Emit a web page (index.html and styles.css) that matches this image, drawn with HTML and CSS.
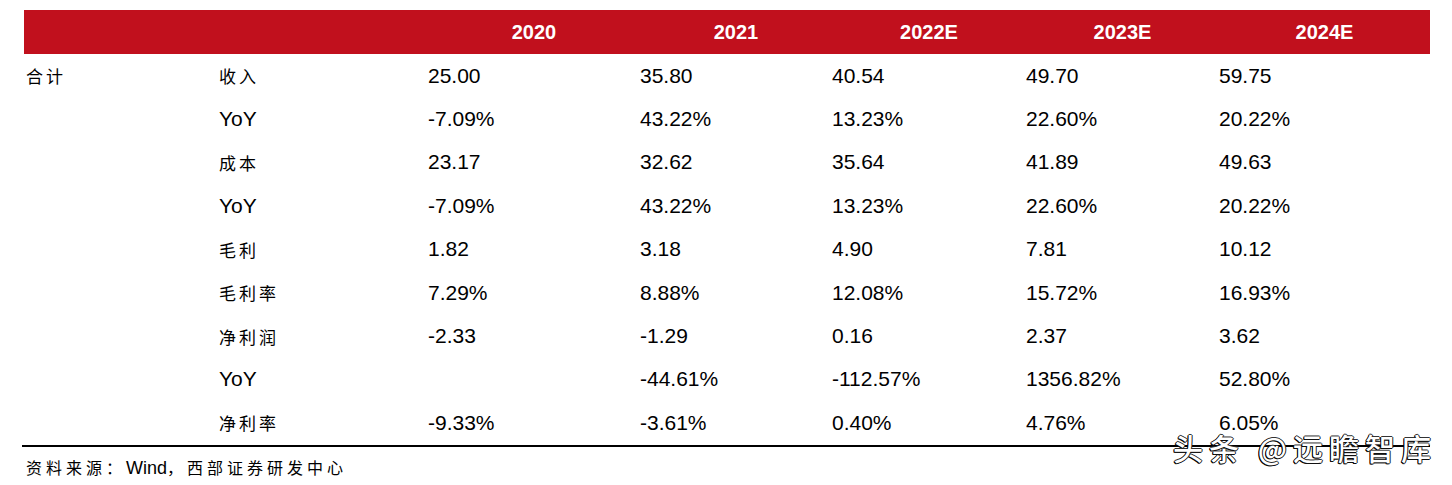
FILE: index.html
```html
<!DOCTYPE html>
<html lang="zh-CN">
<head>
<meta charset="utf-8">
<title>财务预测</title>
<link rel="stylesheet" href="styles.css">
</head>
<body>
<div class="page">
  <div class="table">
    <div class="row head">
      <div class="cell"></div>
      <div class="cell"></div>
      <div class="cell hc">2020</div>
      <div class="cell hc">2021</div>
      <div class="cell hc">2022E</div>
      <div class="cell hc">2023E</div>
      <div class="cell hc">2024E</div>
    </div>
    <div class="row">
      <div class="cell cn first">合计</div>
      <div class="cell cn">收入</div>
      <div class="cell num">25.00</div>
      <div class="cell num">35.80</div>
      <div class="cell num">40.54</div>
      <div class="cell num">49.70</div>
      <div class="cell num">59.75</div>
    </div>
    <div class="row">
      <div class="cell"></div>
      <div class="cell num">YoY</div>
      <div class="cell num">-7.09%</div>
      <div class="cell num">43.22%</div>
      <div class="cell num">13.23%</div>
      <div class="cell num">22.60%</div>
      <div class="cell num">20.22%</div>
    </div>
    <div class="row">
      <div class="cell"></div>
      <div class="cell cn">成本</div>
      <div class="cell num">23.17</div>
      <div class="cell num">32.62</div>
      <div class="cell num">35.64</div>
      <div class="cell num">41.89</div>
      <div class="cell num">49.63</div>
    </div>
    <div class="row">
      <div class="cell"></div>
      <div class="cell num">YoY</div>
      <div class="cell num">-7.09%</div>
      <div class="cell num">43.22%</div>
      <div class="cell num">13.23%</div>
      <div class="cell num">22.60%</div>
      <div class="cell num">20.22%</div>
    </div>
    <div class="row">
      <div class="cell"></div>
      <div class="cell cn">毛利</div>
      <div class="cell num">1.82</div>
      <div class="cell num">3.18</div>
      <div class="cell num">4.90</div>
      <div class="cell num">7.81</div>
      <div class="cell num">10.12</div>
    </div>
    <div class="row">
      <div class="cell"></div>
      <div class="cell cn">毛利率</div>
      <div class="cell num">7.29%</div>
      <div class="cell num">8.88%</div>
      <div class="cell num">12.08%</div>
      <div class="cell num">15.72%</div>
      <div class="cell num">16.93%</div>
    </div>
    <div class="row">
      <div class="cell"></div>
      <div class="cell cn">净利润</div>
      <div class="cell num">-2.33</div>
      <div class="cell num">-1.29</div>
      <div class="cell num">0.16</div>
      <div class="cell num">2.37</div>
      <div class="cell num">3.62</div>
    </div>
    <div class="row">
      <div class="cell"></div>
      <div class="cell num">YoY</div>
      <div class="cell num"></div>
      <div class="cell num">-44.61%</div>
      <div class="cell num">-112.57%</div>
      <div class="cell num">1356.82%</div>
      <div class="cell num">52.80%</div>
    </div>
    <div class="row">
      <div class="cell"></div>
      <div class="cell cn">净利率</div>
      <div class="cell num">-9.33%</div>
      <div class="cell num">-3.61%</div>
      <div class="cell num">0.40%</div>
      <div class="cell num">4.76%</div>
      <div class="cell num">6.05%</div>
    </div>
  </div>
  <div class="rule"></div>
  <div class="source">资料来源：<span class="latin">Wind</span>，西部证券研发中心</div>
  <div class="watermark">头条 @远瞻智库</div>
</div>
</body>
</html>
```
FILE: styles.css
```css
html, body {
  margin: 0;
  padding: 0;
  background: #fff;
}
body {
  width: 1452px;
  height: 485px;
  overflow: hidden;
  font-family: "Liberation Sans", Arial, "Noto Sans CJK SC", sans-serif;
  color: #000;
}
.page {
  position: relative;
  padding-top: 10px;
  height: 475px;
}
.table {
  margin-left: 24px;
  width: 1406px;
}
.row {
  display: grid;
  grid-template-columns: 195px 209px 212px 192px 194px 193px 211px;
  height: 43.4px;
  align-items: center;
}
.row.head {
  height: 44px;
  background: #c1101d;
}
.cell {
  white-space: nowrap;
}
.hc {
  text-align: center;
  color: #fff;
  font-weight: bold;
  font-size: 20px;
}
.num {
  font-size: 21px;
  font-family: "Liberation Sans", Arial, sans-serif;
}
.cn {
  font-family: "Noto Sans CJK SC", sans-serif;
  font-size: 17px;
  letter-spacing: 3px;
}
.first {
  padding-left: 2px;
}
.rule {
  margin-left: 22px;
  width: 1408px;
  height: 2px;
  background: #000;
}
.source {
  margin-left: 26px;
  height: 40px;
  line-height: 40px;
  font-family: "Noto Sans CJK SC", sans-serif;
  font-size: 16px;
  letter-spacing: 4px;
}
.source .latin {
  font-family: "Liberation Sans", Arial, sans-serif;
  font-size: 18px;
  letter-spacing: 0;
}
.watermark {
  position: absolute;
  left: 1173px;
  top: 432px;
  font-family: "Noto Sans CJK SC", sans-serif;
  font-size: 30px;
  font-weight: 500;
  line-height: 30px;
  letter-spacing: 6px;
  white-space: nowrap;
  color: #fff;
  text-shadow: -1px 0 0 #000, 0 1px 0 #111, 1px 0 0 #222, 0 -1px 0 #333, -1px 1px 0 #000;
}
```
